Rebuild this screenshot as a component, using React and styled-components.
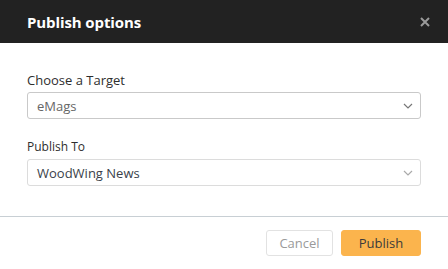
import React from "react";
import styled, { createGlobalStyle } from "styled-components";

const Global = createGlobalStyle`
  html, body { margin: 0; padding: 0; background: #fff; }
  body { font-family: "Open Sans", "Noto Sans", sans-serif; }
`;

const Dialog = styled.div`
  width: 448px;
  height: 269px;
  background: #fff;
  display: flex;
  flex-direction: column;
`;

const Header = styled.div`
  height: 43px;
  background: #222222;
  display: flex;
  align-items: center;
  justify-content: space-between;
  padding: 0 18px 0 27px;
  box-sizing: border-box;
`;

const Title = styled.h1`
  margin: 0;
  color: #fff;
  font-size: 15px;
  font-weight: 700;
  letter-spacing: -0.1px;
`;

const Close = styled.button`
  border: 0;
  background: none;
  padding: 0;
  width: 10px;
  height: 10px;
  display: flex;
  cursor: pointer;
`;

const Body = styled.div`
  padding: 28px 27px 0 27px;
  display: flex;
  flex-direction: column;
  gap: 20px;
  height: 174px;
  box-sizing: border-box;
  border-bottom: 1px solid #c8cfd4;
`;

const Field = styled.div`
  display: flex;
  flex-direction: column;
  gap: ${(p) => (p.$small ? "4px" : "3px")};
`;

const Label = styled.label`
  font-size: ${(p) => (p.$small ? "12px" : "13px")};
  line-height: ${(p) => (p.$small ? "16px" : "18px")};
  color: #2e2e2e;
`;

const Select = styled.div`
  height: 27px;
  box-sizing: border-box;
  border: 1px solid ${(p) => (p.$light ? "#dcdcdc" : "#c9c9c9")};
  border-radius: 3px;
  display: flex;
  align-items: center;
  justify-content: space-between;
  padding: 0 7px 0 9px;
  font-size: 13px;
  color: ${(p) => (p.$dark ? "#3a3f4a" : "#666")};
`;

const Footer = styled.div`
  display: flex;
  justify-content: flex-end;
  gap: 8px;
  padding: 13px 27px 0 0;
`;

const Button = styled.button`
  height: 26px;
  box-sizing: border-box;
  border-radius: 3px;
  font-family: inherit;
  font-size: 13px;
  padding: 0;
  width: ${(p) => (p.$primary ? "80px" : "67px")};
  border: 1px solid ${(p) => (p.$primary ? "#fbb44d" : "#e2e2e2")};
  background: ${(p) => (p.$primary ? "#fbb44d" : "#fff")};
  color: ${(p) => (p.$primary ? "#3b3b3b" : "#9a9a9a")};
`;

const Chevron = ({ color }) => (
  <svg width="10" height="6" viewBox="0 0 10 6">
    <path d="M1 1 L5 5 L9 1" fill="none" stroke={color} strokeWidth="1.2" />
  </svg>
);

export default function App() {
  return (
    <>
      <Global />
      <Dialog>
        <Header>
          <Title>Publish options</Title>
          <Close aria-label="close">
            <svg width="10" height="10" viewBox="0 0 10 10">
              <path d="M1 1 L9 9 M9 1 L1 9" stroke="#9a9a9a" strokeWidth="2" />
            </svg>
          </Close>
        </Header>
        <Body>
          <Field>
            <Label>Choose a Target</Label>
            <Select>
              eMags
              <Chevron color="#777" />
            </Select>
          </Field>
          <Field $small>
            <Label $small>Publish To</Label>
            <Select $dark $light>
              WoodWing News
              <Chevron color="#aaa" />
            </Select>
          </Field>
        </Body>
        <Footer>
          <Button>Cancel</Button>
          <Button $primary>Publish</Button>
        </Footer>
      </Dialog>
    </>
  );
}
